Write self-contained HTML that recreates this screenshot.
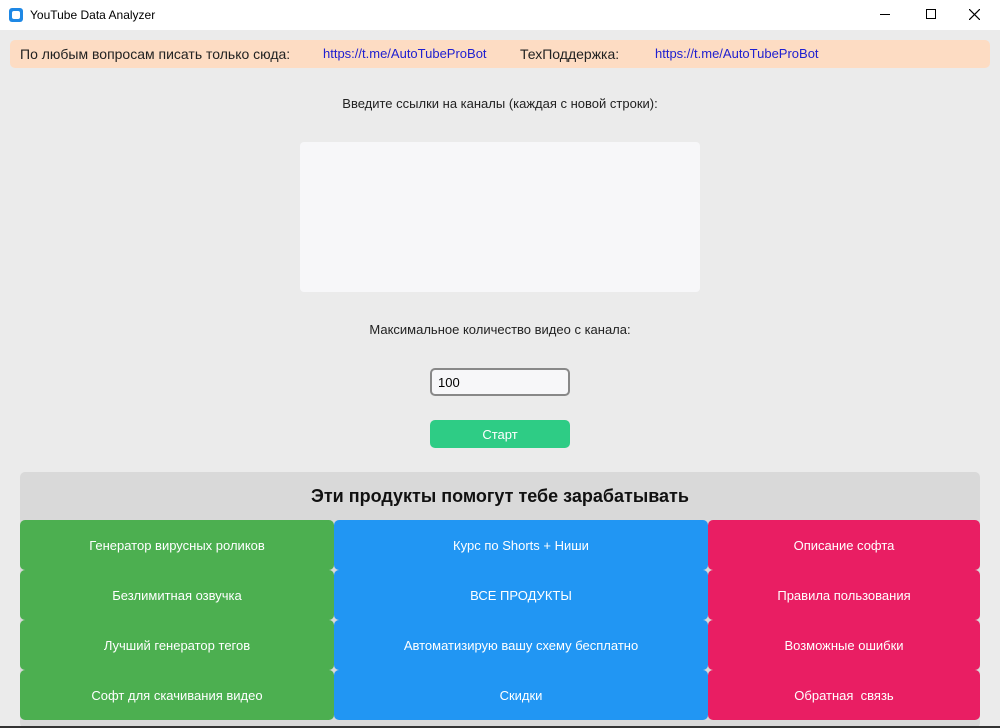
<!DOCTYPE html>
<html><head><meta charset="utf-8"><style>
*{margin:0;padding:0;box-sizing:border-box}
body{width:1000px;height:728px;background:#ebebeb;font-family:"Liberation Sans",sans-serif;position:relative;overflow:hidden}
.tb{position:absolute;left:0;top:0;width:1000px;height:30px;background:#fff;font-size:12px;color:#000}
.ab{position:absolute}
.btn{position:absolute;color:#fff;font-size:13px;display:flex;align-items:center;justify-content:center;border-radius:5px}
.g{background:#4caf50}.b{background:#2196f3}.p{background:#e91e63}
</style></head><body>
<div class="tb">
<div class="ab" style="left:9px;top:8px;width:14px;height:14px;background:#1e88e5;border-radius:3px"><div style="margin:3px;width:8px;height:8px;background:#fff;border-radius:2px"></div></div>
<div class="ab" style="left:30px;top:8px">YouTube Data Analyzer</div>
<div class="ab" style="left:880px;top:14px;width:10px;height:1px;background:#000"></div>
<div class="ab" style="left:926px;top:9px;width:10px;height:10px;border:1px solid #000"></div>
<svg class="ab" style="left:969px;top:9px" width="11" height="11"><path d="M0 0L11 11M11 0L0 11" stroke="#000" stroke-width="1.2"/></svg>
</div>
<div class="ab" style="left:10px;top:40px;width:980px;height:28px;background:#fddcc3;border-radius:5px;font-size:14px">
<span class="ab" style="left:10px;top:6px;color:#222">По любым вопросам писать только сюда:</span>
<span class="ab" style="left:313px;top:6px;color:#2020d0;font-size:13px">https://t.me/AutoTubeProBot</span>
<span class="ab" style="left:510px;top:6px;color:#222">ТехПоддержка:</span>
<span class="ab" style="left:645px;top:6px;color:#2020d0;font-size:13px">https://t.me/AutoTubeProBot</span>
</div>
<div class="ab" style="left:0;width:1000px;top:96px;text-align:center;font-size:13px;color:#222">Введите ссылки на каналы (каждая с новой строки):</div>
<div class="ab" style="left:300px;top:142px;width:400px;height:150px;background:#f7f7f9;border-radius:4px"></div>
<div class="ab" style="left:0;width:1000px;top:322px;text-align:center;font-size:13px;color:#222">Максимальное количество видео с канала:</div>
<div class="ab" style="left:430px;top:368px;width:140px;height:28px;background:#f7f7f9;border:2px solid #888;border-radius:5px;font-size:13px;padding:5px 6px">100</div>
<div class="btn" style="left:430px;top:420px;width:140px;height:28px;background:#2ecc85">Старт</div>
<div class="ab" style="left:20px;top:472px;width:960px;height:256px;background:#d9d9d9;border-radius:5px"></div>
<div class="ab" style="left:0;width:1000px;top:486px;text-align:center;font-size:18px;font-weight:bold;color:#111">Эти продукты помогут тебе зарабатывать</div>
<div class="btn g" style="left:20px;top:520px;width:314px;height:50px">Генератор вирусных роликов</div>
<div class="btn g" style="left:20px;top:570px;width:314px;height:50px">Безлимитная озвучка</div>
<div class="btn g" style="left:20px;top:620px;width:314px;height:50px">Лучший генератор тегов</div>
<div class="btn g" style="left:20px;top:670px;width:314px;height:50px">Софт для скачивания видео</div>
<div class="btn b" style="left:334px;top:520px;width:374px;height:50px">Курс по Shorts + Ниши</div>
<div class="btn b" style="left:334px;top:570px;width:374px;height:50px">ВСЕ ПРОДУКТЫ</div>
<div class="btn b" style="left:334px;top:620px;width:374px;height:50px">Автоматизирую вашу схему бесплатно</div>
<div class="btn b" style="left:334px;top:670px;width:374px;height:50px">Скидки</div>
<div class="btn p" style="left:708px;top:520px;width:272px;height:50px">Описание софта</div>
<div class="btn p" style="left:708px;top:570px;width:272px;height:50px">Правила пользования</div>
<div class="btn p" style="left:708px;top:620px;width:272px;height:50px">Возможные ошибки</div>
<div class="btn p" style="left:708px;top:670px;width:272px;height:50px">Обратная&nbsp; связь</div>
<div class="ab" style="left:0;top:726px;width:1000px;height:2px;background:#333"></div>
</body></html>
